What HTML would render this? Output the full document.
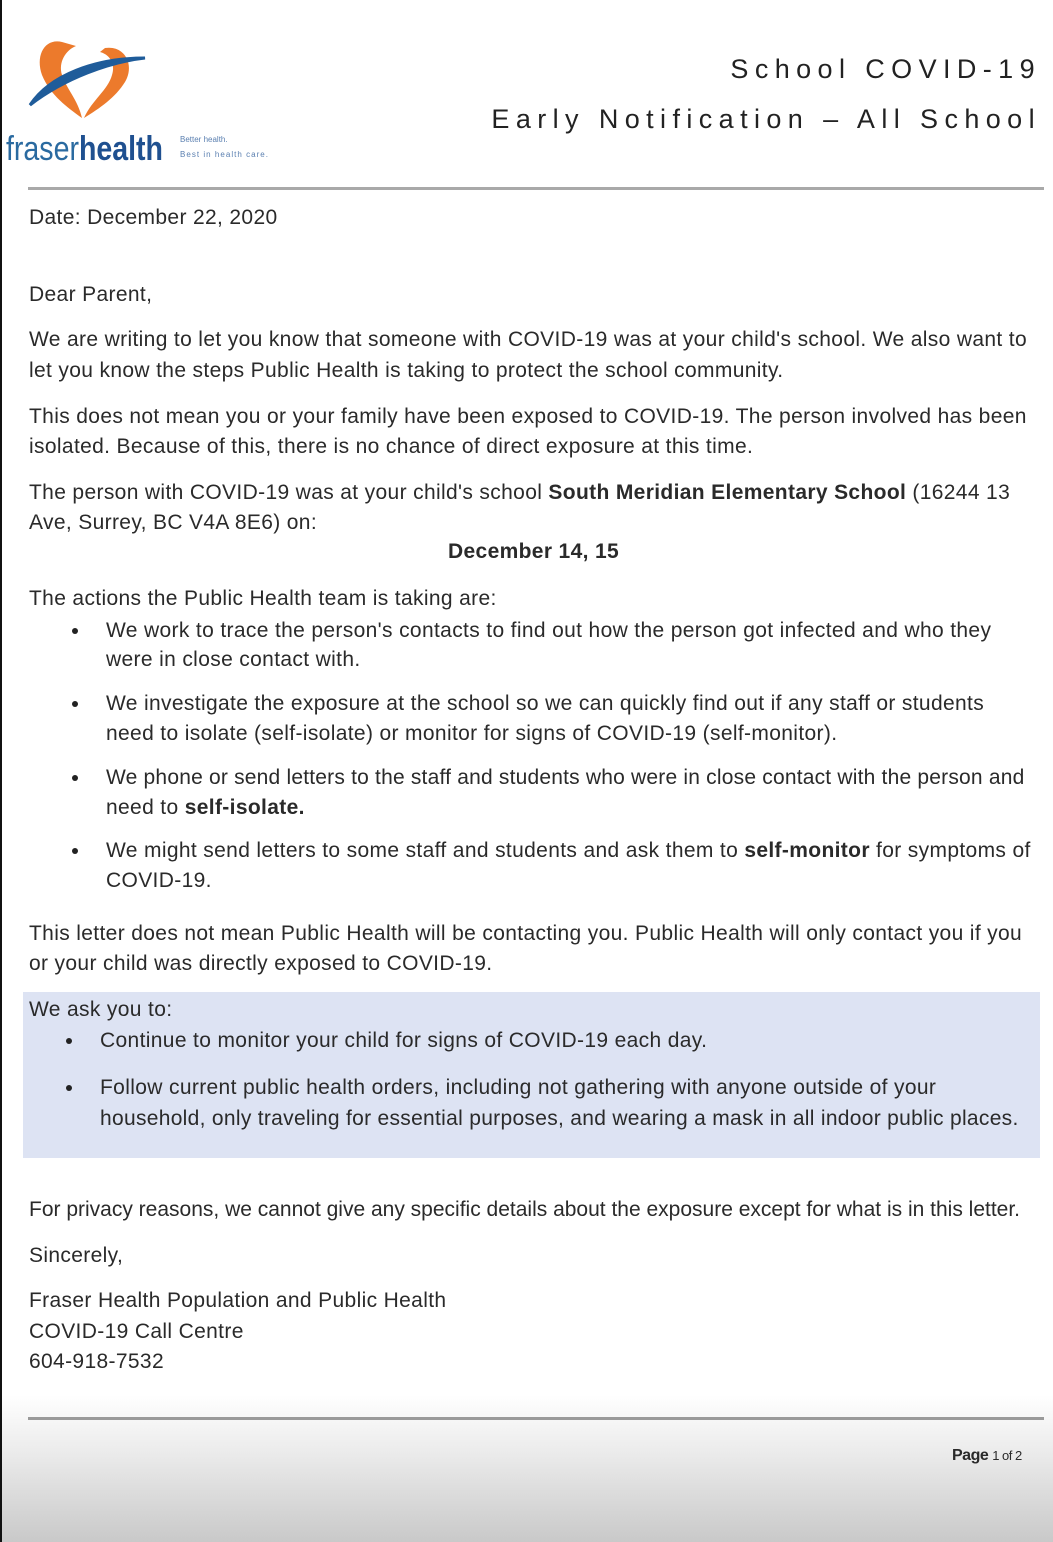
<!DOCTYPE html>
<html><head><meta charset="utf-8"><style>
body{margin:0;width:1053px;height:1542px;overflow:hidden;position:relative;background:#fff;font-family:"Liberation Sans",Arial,sans-serif;color:#2a2a2a}
#bg{position:absolute;left:0;top:0;width:1053px;height:1542px;background:linear-gradient(#fff 0,#fff 1395px,#ececec 1450px,#c9c9c9 1542px)}
#lb{position:absolute;left:0;top:0;width:2px;height:1542px;background:#111}
.l{position:absolute;white-space:nowrap;font-size:21px;line-height:24px;height:24px;letter-spacing:0.35px}
b{font-weight:bold}
.dot{position:absolute;width:6px;height:6px;border-radius:50%;background:#222}
.hr{position:absolute;left:28px;width:1016px;height:3px;background:#a9a9a9}
.h{position:absolute;white-space:nowrap;font-size:27px;letter-spacing:6.4px;color:#222}
</style></head><body>
<div id="bg"></div><div id="lb"></div>
<svg style="position:absolute;left:0;top:30px" width="300" height="140" viewBox="0 30 300 140">
<path d="M62 42 C45 38 35 55 42 75 C50 95 68 108 82 118 C78 100 66 88 62 75 C58 62 66 50 76 46 Z" fill="#ec7a2c"/>
<path d="M105 48 C125 45 135 65 125 82 C115 98 100 108 84 118 C92 100 108 90 112 75 C116 62 108 54 100 52 Z" fill="#ec7a2c"/>
<path d="M30 105 C50 75 95 58 145 58 C110 62 65 78 30 105 Z" fill="#1f5c9a" stroke="#1f5c9a" stroke-width="3"/>
<text x="6" y="160" font-family="Liberation Sans Narrow,Liberation Sans,sans-serif" font-size="34" fill="#2a6aa0" textLength="157" lengthAdjust="spacingAndGlyphs">fraser<tspan font-weight="bold" fill="#1f5090">health</tspan></text>
<text x="180" y="142" font-size="8" fill="#5a7fb0" font-family="Liberation Sans">Better health.</text>
<text x="180" y="157" font-size="8" fill="#5a7fb0" font-family="Liberation Sans" textLength="88">Best in health care.</text>
</svg>
<div class="h" style="right:12px;top:54px">School COVID-19</div>
<div class="h" style="right:12px;top:104px">Early Notification – All School</div>
<div class="hr" style="top:187px"></div>
<div class="l" style="left:29px;top:206px">Date: December 22, 2020</div>
<div class="l" style="left:29px;top:283px">Dear Parent,</div>
<div class="l" style="left:29px;top:328px">We are writing to let you know that someone with COVID-19 was at your child's school. We also want to</div>
<div class="l" style="left:29px;top:359px">let you know the steps Public Health is taking to protect the school community.</div>
<div class="l" style="left:29px;top:405px">This does not mean you or your family have been exposed to COVID-19. The person involved has been</div>
<div class="l" style="left:29px;top:435px">isolated. Because of this, there is no chance of direct exposure at this time.</div>
<div class="l" style="left:29px;top:481px">The person with COVID-19 was at your child's school <b>South Meridian Elementary School</b> (16244 13</div>
<div class="l" style="left:29px;top:511px">Ave, Surrey, BC V4A 8E6) on:</div>
<div class="l" style="left:448px;top:540px"><b>December 14, 15</b></div>
<div class="l" style="left:29px;top:587px">The actions the Public Health team is taking are:</div>
<div class="dot" style="left:72px;top:628px"></div>
<div class="l" style="left:106px;top:619px">We work to trace the person's contacts to find out how the person got infected and who they</div>
<div class="l" style="left:106px;top:648px">were in close contact with.</div>
<div class="dot" style="left:72px;top:701px"></div>
<div class="l" style="left:106px;top:692px">We investigate the exposure at the school so we can quickly find out if any staff or students</div>
<div class="l" style="left:106px;top:722px">need to isolate (self-isolate) or monitor for signs of COVID-19 (self-monitor).</div>
<div class="dot" style="left:72px;top:775px"></div>
<div class="l" style="left:106px;top:766px;letter-spacing:0.2px">We phone or send letters to the staff and students who were in close contact with the person and</div>
<div class="l" style="left:106px;top:796px">need to <b>self-isolate.</b></div>
<div class="dot" style="left:72px;top:848px"></div>
<div class="l" style="left:106px;top:839px">We might send letters to some staff and students and ask them to <b>self-monitor</b> for symptoms of</div>
<div class="l" style="left:106px;top:869px">COVID-19.</div>
<div class="l" style="left:29px;top:922px">This letter does not mean Public Health will be contacting you. Public Health will only contact you if you</div>
<div class="l" style="left:29px;top:952px">or your child was directly exposed to COVID-19.</div>
<div style="position:absolute;left:23px;top:992px;width:1017px;height:166px;background:#dde3f3"></div>
<div class="l" style="left:29px;top:998px">We ask you to:</div>
<div class="dot" style="left:66px;top:1038px"></div>
<div class="l" style="left:100px;top:1029px">Continue to monitor your child for signs of COVID-19 each day.</div>
<div class="dot" style="left:66px;top:1085px"></div>
<div class="l" style="left:100px;top:1076px">Follow current public health orders, including not gathering with anyone outside of your</div>
<div class="l" style="left:100px;top:1107px;letter-spacing:0.3px">household, only traveling for essential purposes, and wearing a mask in all indoor public places.</div>
<div class="l" style="left:29px;top:1198px;letter-spacing:0px">For privacy reasons, we cannot give any specific details about the exposure except for what is in this letter.</div>
<div class="l" style="left:29px;top:1244px">Sincerely,</div>
<div class="l" style="left:29px;top:1289px">Fraser Health Population and Public Health</div>
<div class="l" style="left:29px;top:1320px">COVID-19 Call Centre</div>
<div class="l" style="left:29px;top:1350px">604-918-7532</div>
<div class="hr" style="top:1417px;background:#9a9a9a"></div>
<div class="l" style="left:952px;top:1444px;font-size:16px;letter-spacing:-0.5px"><b>Page</b> <span style="font-size:13px">1 of 2</span></div>
</body></html>
